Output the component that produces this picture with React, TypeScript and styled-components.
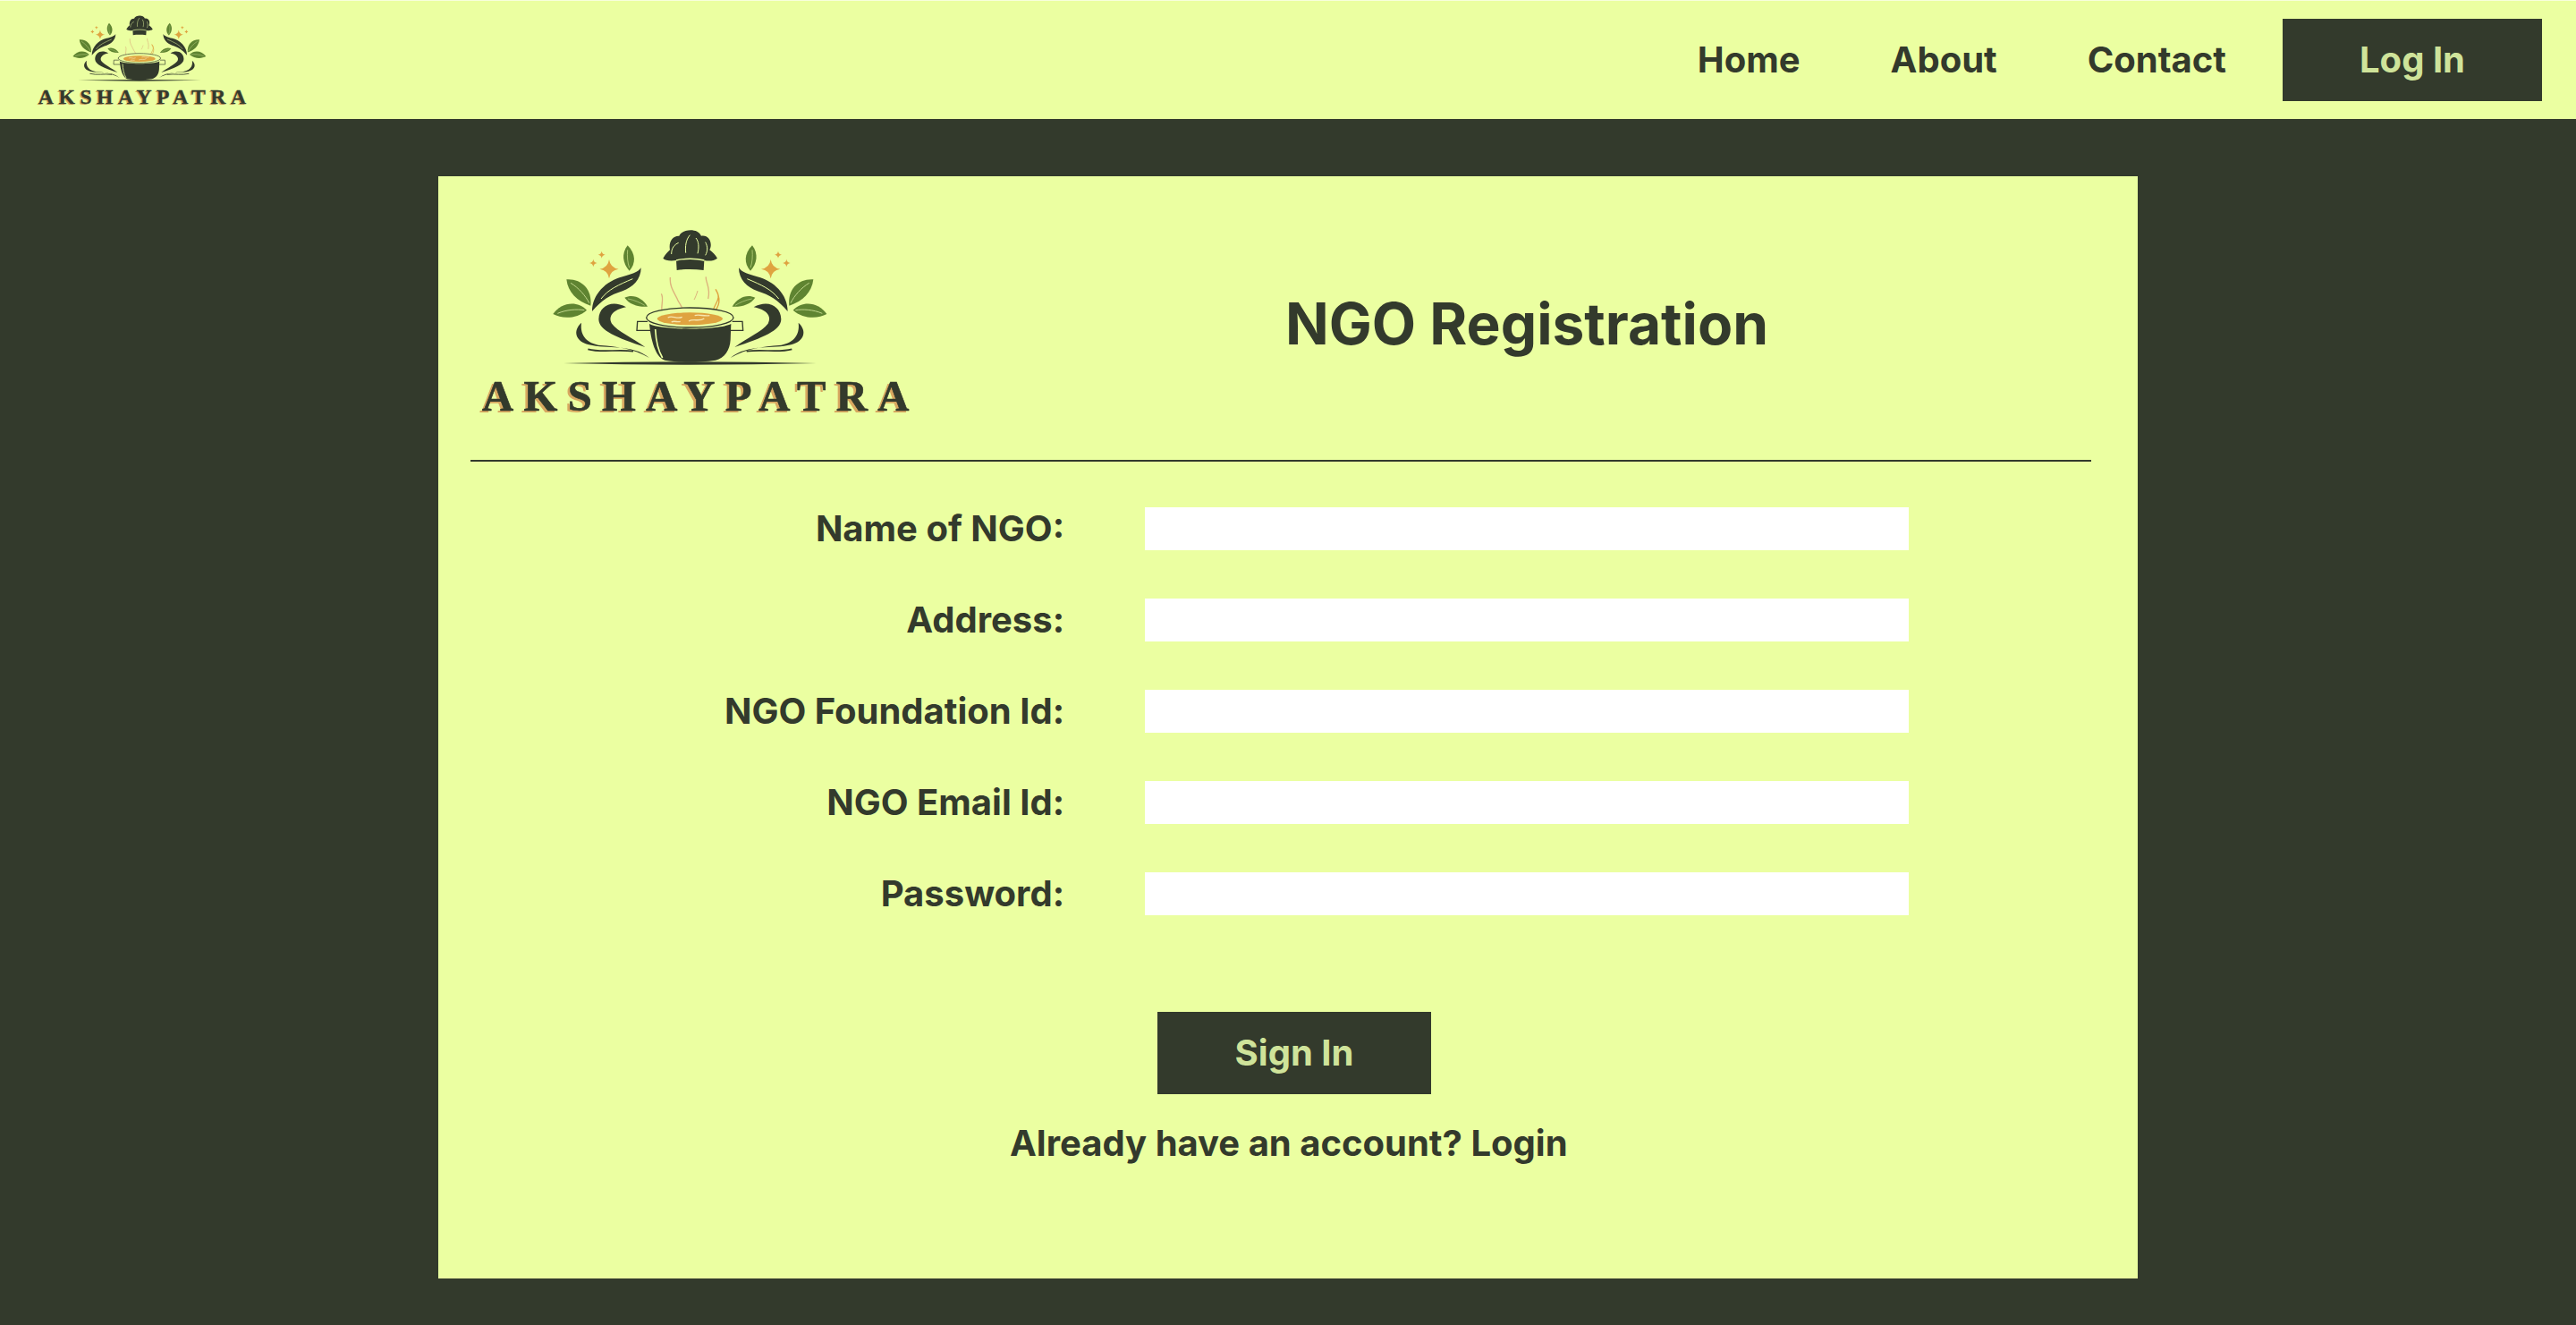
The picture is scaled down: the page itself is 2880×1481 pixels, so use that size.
import React from "react";
import styled, { createGlobalStyle } from "styled-components";

const DARK = "#333a2c";
const LIME = "#ebffa1";
const SOFT = "#cfe39a";
const GREEN = "#5f8431";
const ORANGE = "#dfa340";
const TAN = "#dcb27c";

const Global = createGlobalStyle`
  html, body { margin: 0; padding: 0; background: ${DARK}; }
  body { font-family: Inter, "Liberation Sans", sans-serif; }
`;

const Page = styled.div`
  height: 1481px;
  background: ${DARK};
  color: ${DARK};
  overflow: hidden;
`;

const NavBar = styled.header`
  box-sizing: border-box;
  height: 133px;
  border-top: 1px solid #f7ffdc;
  padding: 0 38px;
  background: ${LIME};
  display: flex;
  align-items: center;
  justify-content: space-between;
`;

const NavLinks = styled.nav`
  display: flex;
  align-items: center;
  gap: 101px;
`;

const NavLink = styled.a`
  font-size: 40px;
  font-weight: 700;
  line-height: 48px;
  color: ${DARK};
  text-decoration: none;
`;

const NavRight = styled.div`
  display: flex;
  align-items: center;
  gap: 63px;
`;

const DarkButton = styled.button`
  box-sizing: border-box;
  width: ${(p: { $w: number }) => p.$w}px;
  height: 92px;
  padding: 0;
  border: 0;
  border-radius: 0;
  background: ${DARK};
  color: ${SOFT};
  font-family: inherit;
  font-size: 40px;
  font-weight: 700;
  line-height: 48px;
`;

const Card = styled.main`
  box-sizing: border-box;
  width: 1900px;
  height: 1232px;
  margin: 64px auto 0;
  padding: 53px 52px 0 36px;
  background: ${LIME};
`;

const CardHeader = styled.div`
  height: 264px;
  display: grid;
  grid-template-columns: 754px 854px;
  align-items: start;
`;

const BrandSlot = styled.div`
  padding-left: 4px;
`;

const Title = styled.h1`
  margin: 73px 0 0;
  font-size: 64px;
  font-weight: 700;
  line-height: 77px;
  text-align: center;
  color: ${DARK};
`;

const Divider = styled.hr`
  height: 2px;
  margin: 0;
  border: 0;
  background: ${DARK};
`;

const Form = styled.form`
  margin-top: 51px;
  display: grid;
  grid-template-columns: 664px 854px;
  column-gap: 90px;
  row-gap: 54px;
`;

const FieldLabel = styled.label`
  font-size: 40px;
  font-weight: 700;
  line-height: 48px;
  text-align: right;
  color: ${DARK};
`;

const FieldInput = styled.input`
  box-sizing: border-box;
  width: 854px;
  height: 48px;
  padding: 0 8px;
  border: 0;
  border-radius: 0;
  background: #ffffff;
`;

const SubmitRow = styled.div`
  margin-top: 108px;
  padding-left: 768px;
`;

const LoginLine = styled.p`
  margin: 31px 0 0;
  padding-left: 603px;
  font-size: 40px;
  font-weight: 700;
  line-height: 48px;
  color: ${DARK};
`;

const LoginLink = styled.a`
  color: inherit;
  text-decoration: none;
`;

const LogoSvg = styled.svg`
  display: block;
  flex: none;
  width: ${(p: { $w: number; $h: number }) => p.$w}px;
  height: ${(p: { $w: number; $h: number }) => p.$h}px;
`;

const star = (x: number, y: number, r: number, k = 0.12) =>
  `M${x} ${y - r}Q${x + r * k} ${y - r * k} ${x + r} ${y}Q${x + r * k} ${y + r * k} ${x} ${y + r}Q${x - r * k} ${y + r * k} ${x - r} ${y}Q${x - r * k} ${y - r * k} ${x} ${y - r}Z`;

function Side() {
  return (
    <g>
      <path d={star(243, 182, 32)} fill={ORANGE} />
      <path d={star(218, 134, 12)} fill={ORANGE} />
      <path d={star(190, 162, 13)} fill={ORANGE} />

      <path d="M305 103C283 130 289 165 311 188C333 165 333 130 305 103Z" fill={GREEN} />
      <path d="M305 118C303 140 305 162 311 178" fill="none" stroke="#a9c46f" strokeWidth="3" />
      <path d="M100 217C150 214 187 250 181 305C135 291 105 260 100 217Z" fill={GREEN} />
      <path d="M114 229C141 245 165 273 176 296" fill="none" stroke="#c0d68a" strokeWidth="3" />
      <path d="M55 333C80 295 135 285 168 320C135 350 85 350 55 333Z" fill={GREEN} />
      <path d="M70 331C100 318 135 316 160 320" fill="none" stroke="#c0d68a" strokeWidth="3" />
      <path d="M295 278C325 265 355 280 372 308C340 310 310 300 295 278Z" fill={GREEN} />
      <path d="M306 282C328 286 348 295 362 304" fill="none" stroke="#c0d68a" strokeWidth="2" />

      <path d="M186 324C186 268 232 222 288 208C315 200 340 194 350 178C350 218 322 244 288 256C248 268 216 288 186 324Z" fill={DARK} />
      <path d="M216 282C240 250 275 235 322 215" fill="none" stroke={LIME} strokeWidth="3" />
      <path d="M300 310C252 284 210 306 208 350C208 388 270 412 364 444C322 412 272 392 252 365C238 340 258 318 300 310Z" fill={DARK} />
      <path d="M150 362C120 390 130 424 175 436C235 452 320 432 378 480C325 448 265 442 215 438C172 432 144 408 150 362Z" fill={DARK} />
      <path d="M172 451C220 464 270 450 324 458" fill="none" stroke={DARK} strokeWidth="5" />
      <path d="M372 358H338L336 388H382" fill="none" stroke={DARK} strokeWidth="4" />
    </g>
  );
}

function Logo({ width, height }: { width: number; height: number }) {
  return (
    <LogoSvg $w={width} $h={height} viewBox="-210 30 1530 660" aria-label="Akshaypatra logo">
      <Side />
      <g transform="translate(1028 0) scale(-1 1)">
        <Side />
      </g>

      <path d="M468 153C450 156 430 154 424 146C432 132 440 125 447 118C442 92 455 70 478 71C487 48 540 42 552 71C577 66 592 95 580 118C590 125 600 135 606 146C595 156 575 156 562 153L560 186C530 182 495 182 470 186Z" fill={DARK} />
      <path d="M468 153C495 146 535 146 562 153" fill="none" stroke={LIME} strokeWidth="4" />
      <path d="M452 132C452 112 462 100 476 94M500 128C498 105 500 85 514 68M540 130C545 110 544 90 534 78M566 136C574 122 574 106 566 92" fill="none" stroke={LIME} strokeWidth="3" />

      <path d="M448 210C445 245 465 265 475 290C485 305 490 315 492 328" fill="none" stroke={TAN} strokeWidth="4" />
      <path d="M568 208C565 225 585 245 575 282" fill="none" stroke={TAN} strokeWidth="4" />
      <path d="M418 265C430 285 410 310 425 345" fill="none" stroke={TAN} strokeWidth="4" />
      <path d="M540 255C536 268 532 278 528 285" fill="none" stroke={TAN} strokeWidth="3" />
      <path d="M600 250C626 285 590 300 590 332C612 310 622 285 600 250Z" fill="none" stroke={ORANGE} strokeWidth="4" />

      <path d="M378 366C420 388 610 388 652 366L650 420C648 455 630 480 600 488C540 496 480 496 430 488C405 480 385 440 378 366Z" fill={DARK} />
      <path d="M398 384C400 420 405 452 422 480" fill="none" stroke={LIME} strokeWidth="5" />
      <ellipse cx="514" cy="345" rx="146" ry="33" fill={LIME} stroke={DARK} strokeWidth="4" />
      <ellipse cx="514" cy="349" rx="110" ry="21" fill={ORANGE} />
      <path d="M440 345C455 336 470 352 488 343M510 357C525 347 545 360 562 348M452 360C462 354 472 362 482 358M530 338C545 332 560 342 580 338" fill="none" stroke="#f5e7b0" strokeWidth="4" />

      <path d="M90 498Q514 488 938 498Q514 508 90 498Z" fill={DARK} />

      <text x="-192" y="664" letterSpacing="34" fontFamily="'Liberation Serif', serif" fontWeight="700" fontSize="146" fill="#d8a860">AKSHAYPATRA</text>
      <text x="-183" y="657" letterSpacing="34" fontFamily="'Liberation Serif', serif" fontWeight="700" fontSize="146" fill={DARK} stroke={DARK} strokeWidth="2">AKSHAYPATRA</text>
    </LogoSvg>
  );
}

const fields = [
  { id: "name", label: "Name of NGO:", type: "text" },
  { id: "address", label: "Address:", type: "text" },
  { id: "foundation", label: "NGO Foundation Id:", type: "text" },
  { id: "email", label: "NGO Email Id:", type: "email" },
  { id: "password", label: "Password:", type: "password" },
];

export default function App() {
  return (
    <Page>
      <Global />
      <NavBar>
        <Logo width={249} height={107} />
        <NavRight>
          <NavLinks>
            <NavLink href="#">Home</NavLink>
            <NavLink href="#">About</NavLink>
            <NavLink href="#">Contact</NavLink>
          </NavLinks>
          <DarkButton $w={290}>Log In</DarkButton>
        </NavRight>
      </NavBar>
      <Card>
        <CardHeader>
          <BrandSlot>
            <Logo width={510} height={220} />
          </BrandSlot>
          <Title>NGO Registration</Title>
        </CardHeader>
        <Divider />
        <Form onSubmit={(e) => e.preventDefault()}>
          {fields.map((f) => (
            <React.Fragment key={f.id}>
              <FieldLabel htmlFor={f.id}>{f.label}</FieldLabel>
              <FieldInput id={f.id} type={f.type} />
            </React.Fragment>
          ))}
        </Form>
        <SubmitRow>
          <DarkButton $w={306}>Sign In</DarkButton>
        </SubmitRow>
        <LoginLine>
          Already have an account? <LoginLink href="#">Login</LoginLink>
        </LoginLine>
      </Card>
    </Page>
  );
}
